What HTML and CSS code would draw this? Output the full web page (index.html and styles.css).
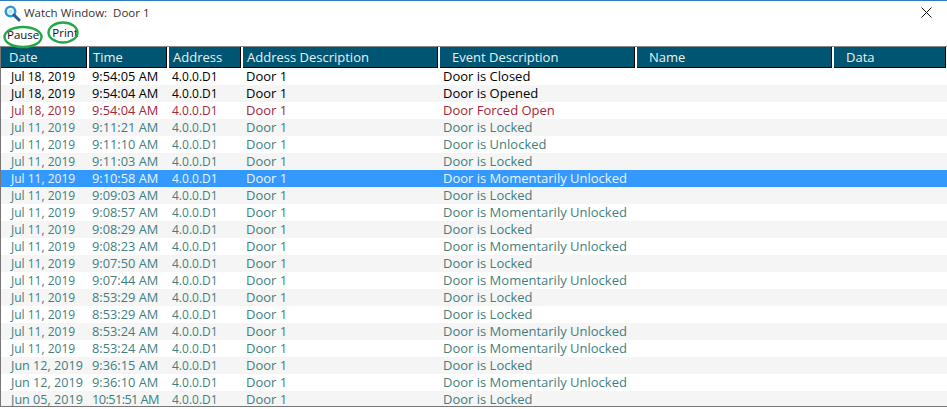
FILE: index.html
```html
<!DOCTYPE html>
<html lang="en">
<head>
  <meta charset="UTF-8">
  <meta name="viewport" content="width=device-width, initial-scale=1.0">
  <title>Watch Window: Door 1</title>
  <link rel="stylesheet" href="styles.css">
</head>
<body>
  <div class="window">
    <div class="title-bar">
      <svg class="title-icon" width="18" height="18" viewBox="0 0 18 18">
        <circle cx="7.5" cy="7.5" r="4.7" fill="#fff" stroke="#2b9bd8" stroke-width="2.6"/>
        <circle cx="7.5" cy="7.5" r="2.2" fill="#bfe3f5"/>
        <path d="M11 11l5 5" stroke="#1f5f99" stroke-width="3" stroke-linecap="round"/>
      </svg>
      <span class="title-text">Watch Window:&nbsp; Door 1</span>
      <svg class="close-icon" width="11" height="11" viewBox="0 0 11 11">
        <path d="M.5.5l10 10M10.5.5l-10 10" stroke="#111" stroke-width="1" fill="none"/>
      </svg>
    </div>

    <div class="toolbar">
      <span class="tool tool-pause">Pause</span>
      <span class="tool tool-print">Print</span>
      <!-- green marks drawn over the toolbar -->
      <svg class="mark mark-pause" width="42" height="24" viewBox="0 0 42 24">
        <ellipse cx="21" cy="12" rx="18.5" ry="10" fill="none" stroke="#22a84a" stroke-width="2.4"/>
      </svg>
      <svg class="mark mark-print" width="34" height="25" viewBox="0 0 34 25">
        <ellipse cx="17" cy="12.5" rx="14.5" ry="10" fill="none" stroke="#22a84a" stroke-width="2.4"/>
      </svg>
    </div>

    <div class="grid">
      <table>
        <colgroup>
          <col class="c-date"><col class="c-time"><col class="c-addr"><col class="c-desc"><col class="c-event"><col class="c-name"><col class="c-data">
        </colgroup>
        <thead>
          <tr>
            <th class="h-date">Date</th>
            <th>Time</th>
            <th>Address</th>
            <th>Address Description</th>
            <th class="h-wide">Event Description</th>
            <th class="h-wide">Name</th>
            <th class="h-wide">Data</th>
          </tr>
        </thead>
        <tbody>
          <tr class="live"><td>Jul 18, 2019</td><td>9:54:05 AM</td><td>4.0.0.D1</td><td>Door 1</td><td>Door is Closed</td><td></td><td></td></tr>
          <tr class="live"><td>Jul 18, 2019</td><td>9:54:04 AM</td><td>4.0.0.D1</td><td>Door 1</td><td>Door is Opened</td><td></td><td></td></tr>
          <tr class="alarm"><td>Jul 18, 2019</td><td>9:54:04 AM</td><td>4.0.0.D1</td><td>Door 1</td><td>Door Forced Open</td><td></td><td></td></tr>
          <tr><td>Jul 11, 2019</td><td>9:11:21 AM</td><td>4.0.0.D1</td><td>Door 1</td><td>Door is Locked</td><td></td><td></td></tr>
          <tr><td>Jul 11, 2019</td><td>9:11:10 AM</td><td>4.0.0.D1</td><td>Door 1</td><td>Door is Unlocked</td><td></td><td></td></tr>
          <tr><td>Jul 11, 2019</td><td>9:11:03 AM</td><td>4.0.0.D1</td><td>Door 1</td><td>Door is Locked</td><td></td><td></td></tr>
          <tr class="selected"><td>Jul 11, 2019</td><td>9:10:58 AM</td><td>4.0.0.D1</td><td>Door 1</td><td>Door is Momentarily Unlocked</td><td></td><td></td></tr>
          <tr><td>Jul 11, 2019</td><td>9:09:03 AM</td><td>4.0.0.D1</td><td>Door 1</td><td>Door is Locked</td><td></td><td></td></tr>
          <tr><td>Jul 11, 2019</td><td>9:08:57 AM</td><td>4.0.0.D1</td><td>Door 1</td><td>Door is Momentarily Unlocked</td><td></td><td></td></tr>
          <tr><td>Jul 11, 2019</td><td>9:08:29 AM</td><td>4.0.0.D1</td><td>Door 1</td><td>Door is Locked</td><td></td><td></td></tr>
          <tr><td>Jul 11, 2019</td><td>9:08:23 AM</td><td>4.0.0.D1</td><td>Door 1</td><td>Door is Momentarily Unlocked</td><td></td><td></td></tr>
          <tr><td>Jul 11, 2019</td><td>9:07:50 AM</td><td>4.0.0.D1</td><td>Door 1</td><td>Door is Locked</td><td></td><td></td></tr>
          <tr><td>Jul 11, 2019</td><td>9:07:44 AM</td><td>4.0.0.D1</td><td>Door 1</td><td>Door is Momentarily Unlocked</td><td></td><td></td></tr>
          <tr><td>Jul 11, 2019</td><td>8:53:29 AM</td><td>4.0.0.D1</td><td>Door 1</td><td>Door is Locked</td><td></td><td></td></tr>
          <tr><td>Jul 11, 2019</td><td>8:53:29 AM</td><td>4.0.0.D1</td><td>Door 1</td><td>Door is Locked</td><td></td><td></td></tr>
          <tr><td>Jul 11, 2019</td><td>8:53:24 AM</td><td>4.0.0.D1</td><td>Door 1</td><td>Door is Momentarily Unlocked</td><td></td><td></td></tr>
          <tr><td>Jul 11, 2019</td><td>8:53:24 AM</td><td>4.0.0.D1</td><td>Door 1</td><td>Door is Momentarily Unlocked</td><td></td><td></td></tr>
          <tr class="jun"><td>Jun 12, 2019</td><td>9:36:15 AM</td><td>4.0.0.D1</td><td>Door 1</td><td>Door is Locked</td><td></td><td></td></tr>
          <tr class="jun"><td>Jun 12, 2019</td><td>9:36:10 AM</td><td>4.0.0.D1</td><td>Door 1</td><td>Door is Momentarily Unlocked</td><td></td><td></td></tr>
          <tr class="jun"><td>Jun 05, 2019</td><td class="tight">10:51:51 AM</td><td>4.0.0.D1</td><td>Door 1</td><td>Door is Locked</td><td></td><td></td></tr>
        </tbody>
      </table>
    </div>
  </div>
</body>
</html>
```

FILE: styles.css
```css
* {
  box-sizing: border-box;
}
html, body {
  margin: 0;
  height: 100%;
  overflow: hidden;
}
body {
  font-family: "Open Sans", "Noto Sans", sans-serif;
  font-size: 13px;
  background: #fff;
  color: #111;
}
.window {
  height: 407px;
  display: flex;
  flex-direction: column;
  border-top: 1px solid #2f7cb8;
}

/* title bar */
.title-bar {
  height: 21px;
  display: flex;
  align-items: center;
  padding: 2px 15px 0 3px;
  flex-shrink: 0;
}
.title-icon {
  flex-shrink: 0;
}
.title-text {
  margin-left: 3px;
  color: #333;
  font-size: 11.5px;
  flex: 1;
}

/* toolbar */
.toolbar {
  position: relative;
  height: 24px;
  display: flex;
  flex-shrink: 0;
  color: #111;
  font-size: 11.5px;
}
.tool-pause {
  margin: 5px 0 0 7px;
}
.tool-print {
  margin: 3px 0 0 13px;
}
.mark {
  position: absolute;
}
.mark-pause {
  left: 2px;
  top: 3px;
}
.mark-print {
  left: 46px;
  top: -2px;
}

/* event grid */
.grid {
  flex: 1;
  min-height: 0;
  overflow: hidden;
  border: 1px solid #777;
  border-right: none;
  border-top: 1px solid #888;
}
table {
  width: 947px;
  table-layout: fixed;
  border-collapse: collapse;
}
.c-date { width: 87px; }
.c-time { width: 80px; }
.c-addr { width: 74px; }
.c-desc { width: 197px; }
.c-event { width: 197px; }
.c-name { width: 197px; }
.c-data { width: 114px; }
th {
  height: 20px;
  padding: 0 0 0 4px;
  background: #005672;
  color: #e8f2f5;
  font-size: 13px;
  font-weight: 400;
  text-align: left;
  border-right: 2px solid #fff;
  border-bottom: 1px solid #000;
  box-shadow: inset -1px 0 0 #000;
  white-space: nowrap;
}
th.h-date {
  padding-left: 8px;
}
th.h-wide {
  padding-left: 12px;
}
td {
  height: 17px;
  padding: 0 0 0 4px;
  line-height: 17px;
  white-space: nowrap;
  overflow: hidden;
  color: #3f7f80;
}
/* date and address digits run narrower than the rest */
td:nth-child(1), td:nth-child(3) {
  font-size: 12px;
}
td:nth-child(2) {
  font-size: 12.8px;
}
td:first-child {
  padding-left: 10px;
}
tr.jun td:first-child {
  font-size: 12.6px;
}
td.tight {
  letter-spacing: -.6px;
}
tbody tr:nth-child(even) {
  background: #f5f5f5;
}
tr.live td {
  color: #000;
}
tr.alarm td {
  color: #a32638;
}
tbody tr.selected {
  background: #3399ff;
}
tr.selected td {
  color: #eaf4ff;
}
```
